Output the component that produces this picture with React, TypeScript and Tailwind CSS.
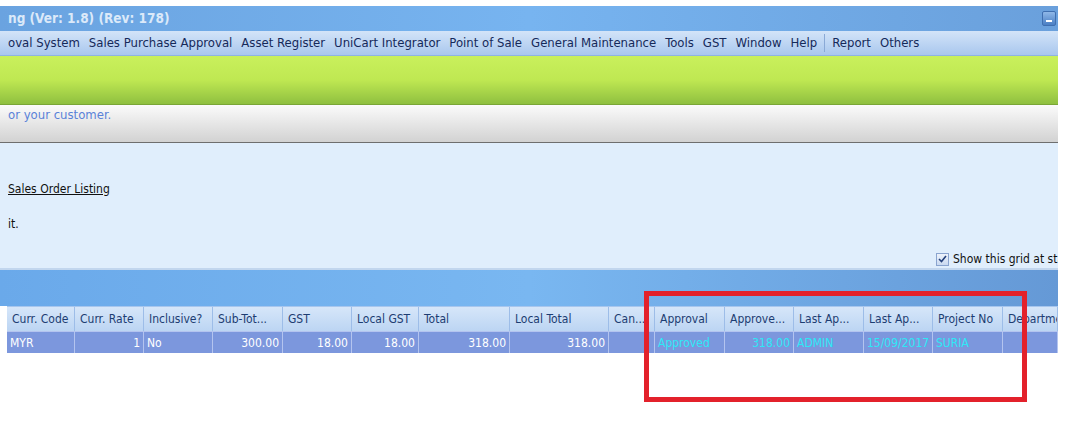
import React from 'react';

const menuItems = [
  'oval System',
  'Sales Purchase Approval',
  'Asset Register',
  'UniCart Integrator',
  'Point of Sale',
  'General Maintenance',
  'Tools',
  'GST',
  'Window',
  'Help',
];

interface Column {
  title: string;
  width: number;
  value: string;
  align?: 'left' | 'right';
  cyan?: boolean;
}

const columns: Column[] = [
  { title: 'Curr. Code', width: 68, value: 'MYR' },
  { title: 'Curr. Rate', width: 69, value: '1', align: 'right' },
  { title: 'Inclusive?', width: 69, value: 'No' },
  { title: 'Sub-Tot...', width: 70, value: '300.00', align: 'right' },
  { title: 'GST', width: 69, value: '18.00', align: 'right' },
  { title: 'Local GST', width: 67, value: '18.00', align: 'right' },
  { title: 'Total', width: 91, value: '318.00', align: 'right' },
  { title: 'Local Total', width: 99, value: '318.00', align: 'right' },
  { title: 'Can...', width: 46, value: '' },
  { title: 'Approval', width: 70, value: 'Approved', cyan: true },
  { title: 'Approve...', width: 69, value: '318.00', align: 'right', cyan: true },
  { title: 'Last Ap...', width: 70, value: 'ADMIN', cyan: true },
  { title: 'Last Ap...', width: 69, value: '15/09/2017', cyan: true },
  { title: 'Project No', width: 70, value: 'SURIA', cyan: true },
  { title: 'Departme', width: 55, value: '' },
];

function MenuBar(): JSX.Element {
  return (
    <div className="h-[25px] flex items-center pl-[8px] bg-gradient-to-b from-[#d3e4f8] to-[#a9c7ee] border-b border-[#8fb3e2] text-[13px] text-[#15295a]">
      <div className="flex items-center gap-[9px]">
        {menuItems.map((m) => (
          <span key={m}>{m}</span>
        ))}
      </div>
      <div className="mx-[7px] h-[18px] w-px bg-[#8aa9d6]" />
      <div className="flex items-center gap-[9px]">
        <span>Report</span>
        <span>Others</span>
      </div>
    </div>
  );
}

function Grid(): JSX.Element {
  return (
    <div className="pl-[7px] bg-white">
      <div className="flex h-[25px] bg-gradient-to-b from-[#d6e6f9] to-[#bcd5f3] border-t border-[#a7c6ee] text-[12px] text-[#1d3d72]">
        {columns.map((c, i) => (
          <div
            key={i}
            style={{ width: c.width }}
            className="shrink-0 flex items-center px-[5px] border-r border-[#9dbde8] whitespace-nowrap overflow-hidden"
          >
            {c.title}
          </div>
        ))}
      </div>
      <div className="flex h-[22px] bg-[#7c97dd] text-[12px]">
        {columns.map((c, i) => (
          <div
            key={i}
            style={{ width: c.width }}
            className={`shrink-0 flex items-center px-[3px] border-r border-t border-[#b4c4ef] whitespace-nowrap overflow-hidden ${
              c.align === 'right' ? 'justify-end' : 'justify-start'
            } ${c.cyan ? 'text-[#2ee8f6]' : 'text-white'}`}
          >
            {c.value}
          </div>
        ))}
      </div>
    </div>
  );
}

export default function App(): JSX.Element {
  return (
    <div className="relative w-[1078px] h-[424px] bg-white overflow-hidden font-['DejaVu_Sans_Condensed','DejaVu_Sans',sans-serif]">
      <div className="pt-[6px] w-[1058px]">
        <div className="h-[25px] flex items-center justify-between pl-[8px] pr-[2px] bg-gradient-to-r from-[#6aa3e0] via-[#77b4f0] to-[#6aa0dc]">
          <span className="text-[13.5px] font-bold text-[#dbe9f9]">ng (Ver: 1.8) (Rev: 178)</span>
          <div className="w-[14px] h-[15px] rounded-[2px] bg-gradient-to-b from-[#8fb8e8] to-[#4a7fc4] border border-[#3f6fb0] flex items-end justify-center pb-[3px]">
            <div className="w-[6px] h-[2px] bg-white" />
          </div>
        </div>
        <MenuBar />
        <div className="h-[49px] bg-gradient-to-b from-[#c9f05c] via-[#bfe852] to-[#8fc040] border-b border-[#7aa636]" />
        <div className="h-[38px] bg-gradient-to-b from-[#fbfbfb] to-[#d2d2d2] border-b border-[#6e6e6e] pl-[8px] text-[13px] text-[#5a82d8]">
          or your customer.
        </div>
        <div className="h-[127px] bg-[#e0eefc] border-b-2 border-[#c2d6ee] flex flex-col pl-[8px] text-[12px] text-[#111]">
          <div className="mt-[37px] underline">Sales Order Listing</div>
          <div className="mt-[17px]">it.</div>
          <div className="mt-[17px] self-end flex items-center gap-[4px] whitespace-nowrap w-[122px] overflow-hidden">
            <div className="w-[13px] h-[13px] shrink-0 border border-[#8aa4cf] bg-gradient-to-b from-[#eef3fb] to-[#c9d9f0] flex items-center justify-center">
              <svg width="9" height="8" viewBox="0 0 9 8">
                <path d="M1 4 L3.5 6.5 L8 1" fill="none" stroke="#24407a" strokeWidth="1.6" />
              </svg>
            </div>
            <span>Show this grid at startup</span>
          </div>
        </div>
        <div className="h-[36px] bg-gradient-to-r from-[#6aa9ea] via-[#79b7f1] to-[#6599d6]" />
        <Grid />
      </div>
      <div className="absolute left-[644px] top-[291px] w-[383px] h-[111px] border-[5px] border-[#e3212b]" />
    </div>
  );
}
